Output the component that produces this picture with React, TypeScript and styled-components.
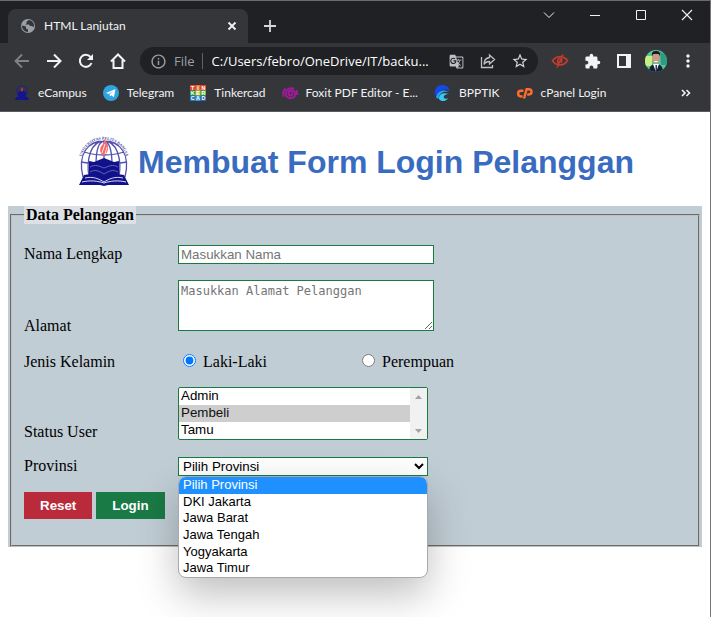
import React from "react";
import styled, { createGlobalStyle } from "styled-components";
import { MdExtension, MdGTranslate, MdOutlineInfo, MdStarBorder, MdMoreVert } from "react-icons/md";

const GlobalStyle = createGlobalStyle`
  * { box-sizing: border-box; }
  body { margin: 0; background: #fff; }
`;

const uiFont = `"Open Sans", "Noto Sans", sans-serif`;
const labelFont = `Lato, "Open Sans", sans-serif`;
const formFont = `"Liberation Sans", Arial, sans-serif`;

const Window = styled.div`
  display: flex;
  flex-direction: column;
  min-height: calc(100vh - 10px);
  margin: 0 3px 10px 0;
  border-top: 1px solid #6b6b6b;
  border-right: 1px solid #767676;
  overflow: hidden;
`;

const Chrome = styled.header`
  background: #35363a;
  color: #f1f3f4;
  font: 12px/16px ${labelFont};
  border-bottom: 1px solid #5a5b5e;
`;

const TabStrip = styled.div`
  display: flex;
  height: 42px;
  padding-left: 8px;
  background: #202124;
`;

const Tab = styled.div`
  display: flex;
  align-items: center;
  flex: 0 1 240px;
  gap: 8px;
  margin-top: 8px;
  padding: 0 8px 0 12px;
  border-radius: 8px 8px 0 0;
  background: #35363a;
`;

const TabTitle = styled.span`
  flex: 1;
  white-space: nowrap;
`;

const IconButton = styled.button<{ $w?: number; $tone?: string }>`
  display: flex;
  align-items: center;
  justify-content: center;
  flex: none;
  width: ${(p) => p.$w ?? 32}px;
  height: 28px;
  padding: 0;
  border: 0;
  background: none;
  color: ${(p) => p.$tone ?? "#f1f3f4"};
`;

const NewTab = styled.div`
  margin: 11px auto 0 6px;
`;

const Toolbar = styled.nav`
  display: flex;
  align-items: center;
  padding: 4px 6px;
`;

const AddressBar = styled.div`
  display: flex;
  align-items: center;
  flex: 1;
  min-width: 0;
  height: 28px;
  margin: 0 6px;
  padding: 0 2px 0 10px;
  border-radius: 14px;
  background: #202124;
  font-family: ${uiFont};
  font-size: 13px;
  color: #9aa0a6;
`;

const Scheme = styled.span`
  margin-left: 7px;
  padding-right: 7px;
  border-right: 1px solid #5f6368;
`;

const Address = styled.span`
  flex: 1;
  margin-left: 9px;
  overflow: hidden;
  white-space: nowrap;
  color: #fff;
`;

const Avatar = styled.svg`
  border-radius: 50%;
`;

const Bookmarks = styled.nav`
  display: flex;
  align-items: center;
  gap: 16px;
  height: 32px;
  padding: 0 8px 4px 14px;
`;

const Bookmark = styled.a`
  display: flex;
  align-items: center;
  gap: 8px;
  color: inherit;
  text-decoration: none;
  white-space: nowrap;
`;

const More = styled.div`
  margin-left: auto;
`;

const Page = styled.main`
  position: relative;
  flex: 1;
  padding: 0 8px 70px;
  overflow: hidden;
  background: #fff;
  color: #000;
  font: 16px/18px "Liberation Serif", "Times New Roman", serif;
`;

const Title = styled.h1`
  display: flex;
  align-items: center;
  justify-content: center;
  gap: 6px;
  margin: 23px 0 17px;
  color: #396bc0;
  font: bold 32px/54px ${formFont};
  white-space: nowrap;
`;

const Form = styled.form`
  background: #c1cdd5;
`;

const Group = styled.fieldset`
  margin: 0 2px;
  padding: 21px 12px 26px;
  border: 2px groove #c0c0c0;
`;

const Legend = styled.legend`
  padding: 0 2px;
  background: #dde1e5;
  font-weight: bold;
`;

const Rows = styled.div`
  display: flex;
  flex-direction: column;
  gap: 16px;
`;

const Row = styled.div<{ $top?: number; $align?: string }>`
  display: flex;
  align-items: ${(p) => p.$align ?? "baseline"};
  padding-top: ${(p) => p.$top ?? 0}px;
`;

const Label = styled.label`
  flex: none;
  width: 154px;
`;

const RadioTitle = styled.span`
  flex: none;
  width: 154px;
`;

const TextInput = styled.input`
  width: 256px;
  height: 19px;
  padding: 1px 2px;
  border: 1px solid #1a7a41;
  background: #fff;
  font-family: ${formFont};
  &::placeholder { color: #757575; }
`;

const TextArea = styled.textarea`
  display: block;
  width: 256px;
  height: 51px;
  margin-bottom: 4px;
  padding: 2px;
  border: 1px solid #1a7a41;
  font: 12px/16px "DejaVu Sans Mono", monospace;
  &::placeholder { color: #757575; }
`;

const Choice = styled.label`
  display: flex;
  align-items: center;
  width: 179px;
  height: 18px;
`;

const Radio = styled.input`
  width: 13px;
  height: 13px;
  margin: 0 7px 3px 5px;
`;

const ListFrame = styled.div`
  position: relative;
  width: 250px;
  margin-bottom: 1px;
`;

const StatusList = styled.select`
  display: block;
  width: 100%;
  height: 53px;
  padding: 0;
  border: 1px solid #1a7a41;
  border-radius: 2px;
  background: #fff;
  color: #000;
  font-family: ${formFont};
  option { min-height: 17px; padding: 0 2px 1px; }
`;

const ScrollTrack = styled.div`
  position: absolute;
  top: 1px;
  right: 1px;
  bottom: 1px;
  display: flex;
  flex-direction: column;
  align-items: center;
  justify-content: space-between;
  width: 17px;
  padding: 7px 0 6px;
  background: #f1f1f1;
  color: #a3a3a3;
  pointer-events: none;
`;

const SelectAnchor = styled.div`
  position: relative;
  width: 250px;
`;

const Province = styled.select`
  display: block;
  width: 100%;
  height: 19px;
  padding: 0;
  border: 1px solid #1a7a41;
  border-radius: 0;
  background: #fff;
  color: #000;
  font-family: ${formFont};
`;

const Menu = styled.ul`
  position: absolute;
  z-index: 2;
  top: 19px;
  left: 0;
  display: flex;
  flex-direction: column;
  width: 100%;
  height: 102px;
  margin: 0;
  padding: 0;
  overflow: hidden;
  border: 1px solid #a9a9a9;
  border-radius: 8px;
  background: #fff;
  box-shadow: 0 16px 40px rgba(0, 0, 0, 0.26);
  font: 13px/16px ${formFont};
  list-style: none;
`;

const MenuItem = styled.li<{ $active?: boolean }>`
  flex: 1;
  padding-left: 4px;
  background: ${(p) => (p.$active ? "#1e90ff" : "transparent")};
  color: ${(p) => (p.$active ? "#fff" : "#000")};
`;

const Actions = styled.div`
  display: flex;
  gap: 4px;
`;

const Action = styled.button<{ $color: string }>`
  height: 27px;
  padding: 0 16px;
  border: 0;
  background: ${(p) => p.$color};
  color: #fff;
  font-family: ${formFont};
  font-weight: bold;
`;

const Line = ({ d, size = 16, w = 2 }: { d: string; size?: number; w?: number }) => (
  <svg width={size} height={size} viewBox="0 0 16 16" fill="none" stroke="currentColor" strokeWidth={w} aria-hidden="true">
    <path d={d} />
  </svg>
);

const Crest = () => (
  <svg width="56" height="54" viewBox="0 0 56 54" aria-hidden="true">
    <defs>
      <path id="rim" d="M5 30 C4 -4 52 -4 51 30" />
    </defs>
    <text fontSize="4" fontWeight="bold" fontFamily="Liberation Serif, serif" fill="#4a4aa0" textAnchor="middle">
      <textPath href="#rim" startOffset="50%">UNIVERSITAS PELITA BANGSA</textPath>
    </text>
    <g fill="none" stroke="#5151ab" strokeWidth="1.3">
      <path d="M7 42C1 18 13 6 28 6s27 12 21 36M13 42C10 24 15 6 28 6s18 18 15 36M20 30c0-12 2-23 8-24 6 1 8 12 8 24M8 17c12 4 28 4 40 0M5 27c14 3 32 3 46 0M28 6v22" />
    </g>
    <path d="M28 4c5 4 6 12 0 17-6-4-4-9-1-12 1-1 1-3 1-5z" fill="#f26c6c" />
    <path d="M26 18l3-9M29 19l2-7" stroke="#fff" strokeWidth=".8" />
    <path d="M13 26l5 1 10-4 10 4 5-1v15l-10 1-5 4-5-4-10-1z" fill="#11118c" />
    <path d="M14 32c5-3 9-1 14 1 5-2 9-4 14-1M14 37c5-3 9-1 14 2 5-3 9-5 14-2" fill="none" stroke="#7777be" strokeWidth=".8" />
    <path d="M8 40c8-2 15 0 20 5 5-5 12-7 20-5l5 10H32l-4 1-4-1H3z" fill="#11118c" />
    <path d="M9 43c8-2 14 1 19 4 5-3 11-6 19-4M6 47c8-2 16-1 22 1 6-2 14-3 22-1" fill="none" stroke="#d9d9f2" strokeWidth="1" />
  </svg>
);

const Globe = () => (
  <svg width="16" height="16" viewBox="0 0 16 16" aria-hidden="true">
    <circle cx="8" cy="8" r="7" fill="#9aa0a6" />
    <path d="M2 7.500l4 1v2l2 1v2.500C4.500 14 1.700 11 2 7.500zM8.500 2l-2 2v1.500L5 6.500h4l1 1.500h1.500l2.500 1C14.500 5 12 2 8.500 2z" fill="#35363a" />
  </svg>
);

const MiniCrest = () => (
  <svg width="16" height="16" viewBox="0 0 16 16" aria-hidden="true">
    <path d="M3 10C1 4 5 1 8 1s7 3 5 9" fill="none" stroke="#28286f" strokeWidth="1.5" />
    <path d="M4 7l4-2 4 2v5H4zM2 12h12l1 3H1z" fill="#15158b" />
    <path d="M8 2c2 2 1 4 0 5-2-2-1-3 0-5z" fill="#a33b52" />
  </svg>
);

const Telegram = () => (
  <svg width="16" height="16" viewBox="0 0 16 16" aria-hidden="true">
    <circle cx="8" cy="8" r="8" fill="#2fa4dd" />
    <path d="M3 8l9.500-4-1.600 8.200-2.600-2-1.400 1.400-.3-2.300L10.500 6 5.600 9z" fill="#fff" />
  </svg>
);

const tiles = [
  ["T", "#e8452f"], ["I", "#f06a35"], ["N", "#e8452f"],
  ["K", "#2f9e56"], ["E", "#c0cf35"], ["R", "#54b54d"],
  ["C", "#2b75bd"], ["A", "#2f9bd7"], ["D", "#2668b0"],
];
const Tinker = () => (
  <svg width="16" height="16" viewBox="0 0 15 15" aria-hidden="true" fontFamily="Liberation Sans, sans-serif" fontSize="5" fontWeight="bold" textAnchor="middle">
    {tiles.map(([letter, color], i) => {
      const x = (i % 3) * 5;
      const y = Math.floor(i / 3) * 5;
      return (
        <g key={letter}>
          <rect x={x} y={y} width="5" height="5" fill={color} />
          <text x={x + 2.5} y={y + 4.3} fill="#fff">{letter}</text>
        </g>
      );
    })}
  </svg>
);

const Foxit = () => (
  <svg width="16" height="16" viewBox="0 0 16 16" fill="none" stroke="#a3199b" strokeWidth="2" strokeLinecap="round" aria-hidden="true">
    <path d="M10 8c1 1.500-.5 3-2 2.500-2-.7-2-3.500 0-4.500 2.700-1.200 5.500.6 5.300 3.300-.2 2.800-3 4.400-5.800 3.900C4 12.500 2.800 8.700 4.500 6 6 3.500 9 2.800 11.500 3.500M1.500 11C.8 8 1.300 5.500 3 4M14.800 6c.5 1 .5 2 .2 3" />
  </svg>
);

const Bpptik = () => (
  <svg width="17" height="16" viewBox="0 0 17 16" aria-hidden="true">
    <path d="M1 10C0 4 3 0 8 0c4 0 7 2 8 6-5-3-9-1-11 2-1 2-2 3-4 2z" fill="#1448e8" />
    <path d="M2 12c2-6 7-8 13-5-5-1-9 1-10 5 0 2-2 2-3 0z" fill="#2a9df4" />
    <path d="M5 14c0-5 4-7 10-5-4 0-6 2-5 4 1 1 3 1 4 0-2 4-7 4-9 1z" fill="#35c9f5" />
  </svg>
);

const CPanel = () => (
  <svg width="17" height="16" viewBox="0 0 17 16" fill="none" stroke="#ff6c2c" strokeWidth="2.4" aria-hidden="true">
    <path d="M7.500 5.700H5a2.900 2.900 0 0 0 0 5.800h1.500M8 13.500l2.600-9.300h2.300a2.600 2.600 0 0 1 0 5.300h-1.700" />
  </svg>
);

const EyeSlash = () => (
  <svg width="18" height="16" viewBox="0 0 18 16" fill="none" stroke="#c53a2f" strokeWidth="1.7" aria-hidden="true">
    <path d="M1.500 8C5 2.500 12 2 16.500 7.500 13 13 6 13.500 1.500 8zM12 1.500L6 14.500" />
    <path d="M9 5c-3 1-3 4-1 5.500M11 6l-1 4" />
  </svg>
);

const Person = () => (
  <Avatar width="22" height="22" viewBox="0 0 22 22" aria-hidden="true">
    <path d="M0 0h22v22H0z" fill="#52c7a0" />
    <path d="M0 6h7v10H0z" fill="#c8ee83" />
    <path d="M15 2l7 3v10h-6z" fill="#2c9d80" />
    <path d="M4 22c0-6 3-8 7-8s7 2 7 8z" fill="#17202e" />
    <path d="M8 14l3 8 3-8z" fill="#fff" />
    <path d="M10.500 15h1.500v7h-1.500z" fill="#233b6c" />
    <ellipse cx="11" cy="8" rx="3.800" ry="5.800" fill="#d09a82" />
    <path d="M7 6C6.500 2 8 1 11 1s4.500 1 4 5l-1.500-2h-5z" fill="#1b1b1d" />
    <path d="M9.500 11.500h3" stroke="#fff" />
  </Avatar>
);

const provinces = ["Pilih Provinsi", "DKI Jakarta", "Jawa Barat", "Jawa Tengah", "Yogyakarta", "Jawa Timur"];

const bookmarks = [
  { name: "eCampus", icon: <MiniCrest /> },
  { name: "Telegram", icon: <Telegram /> },
  { name: "Tinkercad", icon: <Tinker /> },
  { name: "Foxit PDF Editor - E...", icon: <Foxit /> },
  { name: "BPPTIK", icon: <Bpptik /> },
  { name: "cPanel Login", icon: <CPanel /> },
];

export default function App() {
  return (
    <>
      <GlobalStyle />
      <Window>
        <Chrome>
          <TabStrip>
            <Tab>
              <Globe />
              <TabTitle>HTML Lanjutan</TabTitle>
              <IconButton $w={16} aria-label="Close tab"><Line w={1.8} d="M4.500 4.500l7 7M11.500 4.500l-7 7" /></IconButton>
            </Tab>
            <NewTab>
              <IconButton aria-label="New tab" $tone="#d5d7da"><Line w={1.8} d="M8 2v12M2 8h12" /></IconButton>
            </NewTab>
            <IconButton $w={46} aria-label="Search tabs"><Line w={1} d="M3 5.500l5 5 5-5" /></IconButton>
            <IconButton $w={46} aria-label="Minimize"><Line w={1} d="M3 8.500h10" /></IconButton>
            <IconButton $w={46} aria-label="Maximize"><Line w={1} d="M3.500 3.500h9v9h-9z" /></IconButton>
            <IconButton $w={46} aria-label="Close window"><Line w={1.1} d="M3 3l10 10M13 3L3 13" /></IconButton>
          </TabStrip>
          <Toolbar>
            <IconButton $tone="#808286" aria-label="Back"><Line w={1.8} d="M15 8H2M8 1.500L1.500 8 8 14.500" /></IconButton>
            <IconButton aria-label="Forward"><Line d="M1 8h13M8 1.500L14.500 8 8 14.500" /></IconButton>
            <IconButton aria-label="Reload">
              <svg width="16" height="16" viewBox="0 0 16 16" fill="none" stroke="currentColor" strokeWidth="2" aria-hidden="true">
                <path d="M13.500 10A6 6 0 1 1 12.500 4" />
                <path d="M15 1v6H9z" fill="currentColor" stroke="none" />
              </svg>
            </IconButton>
            <IconButton aria-label="Home"><Line d="M1 8.500L8 1.500l7 7M3.500 7v8h9V7" /></IconButton>
            <AddressBar>
              <MdOutlineInfo size={17} />
              <Scheme>File</Scheme>
              <Address>C:/Users/febro/OneDrive/IT/backu...</Address>
              <IconButton $tone="#bdc1c6" aria-label="Translate"><MdGTranslate size={15} /></IconButton>
              <IconButton $tone="#bdc1c6" aria-label="Share"><Line w={1.3} d="M1.500 4v10.500h11V12M9.500 2l5 4.500-5 4.500V8.500c-3 0-4.500 1-5.500 3 0-4 2-6.500 5.500-7z" /></IconButton>
              <IconButton $tone="#d5d7da" aria-label="Bookmark this page"><MdStarBorder size={18} /></IconButton>
            </AddressBar>
            <IconButton aria-label="Hidden content extension"><EyeSlash /></IconButton>
            <IconButton aria-label="Extensions"><MdExtension size={17} /></IconButton>
            <IconButton aria-label="Side panel">
              <svg width="14" height="14" viewBox="0 0 14 14" fill="currentColor" aria-hidden="true"><path fillRule="evenodd" d="M0 0h14v14H0zM2 2h7v10H2z" /></svg>
            </IconButton>
            <IconButton aria-label="Profile"><Person /></IconButton>
            <IconButton aria-label="Menu"><MdMoreVert size={20} /></IconButton>
          </Toolbar>
          <Bookmarks>
            {bookmarks.map((b) => (
              <Bookmark href="#" key={b.name}>{b.icon}{b.name}</Bookmark>
            ))}
            <More><IconButton aria-label="More bookmarks"><Line w={1.6} d="M4 5l3 3-3 3M8.500 5l3 3-3 3" /></IconButton></More>
          </Bookmarks>
        </Chrome>
        <Page>
          <Title><Crest />Membuat Form Login Pelanggan</Title>
          <Form>
            <Group>
              <Legend>Data Pelanggan</Legend>
              <Rows>
                <Row>
                  <Label htmlFor="nama">Nama Lengkap</Label>
                  <TextInput id="nama" placeholder="Masukkan Nama" />
                </Row>
                <Row $align="flex-end">
                  <Label htmlFor="alamat">Alamat</Label>
                  <TextArea id="alamat" placeholder="Masukkan Alamat Pelanggan" />
                </Row>
                <Row $top={2} role="radiogroup" aria-labelledby="jk">
                  <RadioTitle id="jk">Jenis Kelamin</RadioTitle>
                  <Choice><Radio type="radio" name="jk" defaultChecked />Laki-Laki</Choice>
                  <Choice><Radio type="radio" name="jk" />Perempuan</Choice>
                </Row>
                <Row $align="flex-end">
                  <Label htmlFor="status">Status User</Label>
                  <ListFrame>
                    <StatusList id="status" size={3} defaultValue="Pembeli">
                      <option>Admin</option>
                      <option>Pembeli</option>
                      <option>Tamu</option>
                    </StatusList>
                    <ScrollTrack aria-hidden="true">
                      <svg width="7" height="4" viewBox="0 0 7 4" fill="currentColor"><path d="M0 4l3.500-4L7 4z" /></svg>
                      <svg width="7" height="4" viewBox="0 0 7 4" fill="currentColor"><path d="M0 0l3.500 4L7 0z" /></svg>
                    </ScrollTrack>
                  </ListFrame>
                </Row>
                <Row>
                  <Label htmlFor="provinsi">Provinsi</Label>
                  <SelectAnchor>
                    <Province id="provinsi">
                      {provinces.map((p) => <option key={p}>{p}</option>)}
                    </Province>
                    <Menu role="listbox" aria-label="Provinsi">
                      {provinces.map((p, i) => (
                        <MenuItem key={p} role="option" aria-selected={i === 0} $active={i === 0}>{p}</MenuItem>
                      ))}
                    </Menu>
                  </SelectAnchor>
                </Row>
                <Actions>
                  <Action type="reset" $color="#b92b3a">Reset</Action>
                  <Action type="submit" $color="#1a7a45">Login</Action>
                </Actions>
              </Rows>
            </Group>
          </Form>
        </Page>
      </Window>
    </>
  );
}
